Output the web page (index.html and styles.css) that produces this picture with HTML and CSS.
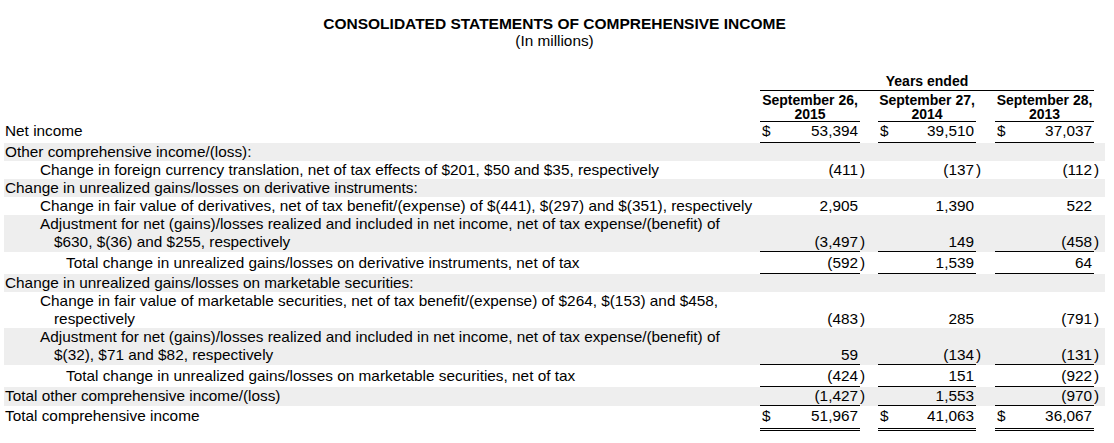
FILE: index.html
```html
<!DOCTYPE html>
<html>
<head>
<meta charset="utf-8">
<title>Consolidated Statements of Comprehensive Income</title>
<link rel="stylesheet" href="styles.css">
</head>
<body>
<div class="page">
  <div class="title">CONSOLIDATED STATEMENTS OF COMPREHENSIVE INCOME</div>
  <div class="subtitle">(In millions)</div>
  <table class="stmt">
    <colgroup>
      <col class="c-label"><col class="c-a"><col class="c-par"><col class="c-g1">
      <col class="c-b"><col class="c-par"><col class="c-g2">
      <col class="c-c"><col class="c-par"><col class="c-tail">
    </colgroup>
    <tr class="hrow1">
      <td></td><td class="yrs" colspan="7">Years ended</td><td colspan="2"></td>
    </tr>
    <tr class="hrow2">
      <td></td><td class="hd">September 26,<br>2015</td><td></td><td></td>
      <td class="hd">September 27,<br>2014</td><td></td><td></td>
      <td class="hd">September 28,<br>2013</td><td colspan="2"></td>
    </tr>
    <tr class="net u">
      <td class="l0">Net income</td>
      <td class="n ul"><span class="cur">$</span>53,394</td><td class="p"></td><td></td>
      <td class="n ul"><span class="cur">$</span>39,510</td><td class="p"></td><td></td>
      <td class="n ul"><span class="cur">$</span>37,037</td><td class="p"></td><td></td>
    </tr>
    <tr class="alt">
      <td class="l0">Other comprehensive income/(loss):</td>
      <td></td><td></td><td></td><td></td><td></td><td></td><td></td><td></td><td></td>
    </tr>
    <tr>
      <td class="l1">Change in foreign currency translation, net of tax effects of $201, $50 and $35, respectively</td>
      <td class="n">(411</td><td class="p">)</td><td></td>
      <td class="n">(137</td><td class="p">)</td><td></td>
      <td class="n">(112</td><td class="p">)</td><td></td>
    </tr>
    <tr class="alt">
      <td class="l0">Change in unrealized gains/losses on derivative instruments:</td>
      <td></td><td></td><td></td><td></td><td></td><td></td><td></td><td></td><td></td>
    </tr>
    <tr>
      <td class="l1">Change in fair value of derivatives, net of tax benefit/(expense) of $(441), $(297) and $(351), respectively</td>
      <td class="n">2,905</td><td class="p"></td><td></td>
      <td class="n">1,390</td><td class="p"></td><td></td>
      <td class="n">522</td><td class="p"></td><td></td>
    </tr>
    <tr class="alt u">
      <td class="l1">Adjustment for net (gains)/losses realized and included in net income, net of tax expense/(benefit) of<br>$630, $(36) and $255, respectively</td>
      <td class="n ul">(3,497</td><td class="p">)</td><td></td>
      <td class="n ul">149</td><td class="p"></td><td></td>
      <td class="n ul">(458</td><td class="p">)</td><td></td>
    </tr>
    <tr class="tot u">
      <td class="l2">Total change in unrealized gains/losses on derivative instruments, net of tax</td>
      <td class="n ul">(592</td><td class="p">)</td><td></td>
      <td class="n ul">1,539</td><td class="p"></td><td></td>
      <td class="n ul">64</td><td class="p"></td><td></td>
    </tr>
    <tr class="alt">
      <td class="l0">Change in unrealized gains/losses on marketable securities:</td>
      <td></td><td></td><td></td><td></td><td></td><td></td><td></td><td></td><td></td>
    </tr>
    <tr>
      <td class="l1">Change in fair value of marketable securities, net of tax benefit/(expense) of $264, $(153) and $458,<br>respectively</td>
      <td class="n">(483</td><td class="p">)</td><td></td>
      <td class="n">285</td><td class="p"></td><td></td>
      <td class="n">(791</td><td class="p">)</td><td></td>
    </tr>
    <tr class="alt u">
      <td class="l1">Adjustment for net (gains)/losses realized and included in net income, net of tax expense/(benefit) of<br>$(32), $71 and $82, respectively</td>
      <td class="n ul">59</td><td class="p"></td><td></td>
      <td class="n ul">(134</td><td class="p">)</td><td></td>
      <td class="n ul">(131</td><td class="p">)</td><td></td>
    </tr>
    <tr class="tot u">
      <td class="l2">Total change in unrealized gains/losses on marketable securities, net of tax</td>
      <td class="n ul">(424</td><td class="p">)</td><td></td>
      <td class="n ul">151</td><td class="p"></td><td></td>
      <td class="n ul">(922</td><td class="p">)</td><td></td>
    </tr>
    <tr class="alt u">
      <td class="l0">Total other comprehensive income/(loss)</td>
      <td class="n ul">(1,427</td><td class="p">)</td><td></td>
      <td class="n ul">1,553</td><td class="p"></td><td></td>
      <td class="n ul">(970</td><td class="p">)</td><td></td>
    </tr>
    <tr class="grand">
      <td class="l0">Total comprehensive income</td>
      <td class="n dbl"><span class="cur">$</span>51,967</td><td class="p"></td><td></td>
      <td class="n dbl"><span class="cur">$</span>41,063</td><td class="p"></td><td></td>
      <td class="n dbl"><span class="cur">$</span>36,067</td><td class="p"></td><td></td>
    </tr>
  </table>
</div>
</body>
</html>
```

FILE: styles.css
```css
html, body {
  margin: 0;
  padding: 0;
  background: #ffffff;
}

body {
  font-family: "Liberation Sans", Arial, sans-serif;
  color: #000000;
}

.page {
  width: 1101px;
  margin-left: 4px;
  padding-top: 15px;
}

.title {
  font-weight: bold;
  font-size: 15.5px;
  line-height: 17px;
  text-align: center;
}

.subtitle {
  font-size: 15.35px;
  line-height: 18px;
  text-align: center;
}

.stmt {
  margin-top: 24px;
  width: 1101px;
  table-layout: fixed;
  border-collapse: separate;
  border-spacing: 0;
  font-size: 15.35px;
}

.stmt td {
  padding: 0;
  line-height: 18px;
  vertical-align: bottom;
  white-space: nowrap;
}

col.c-label { width: 756px; }
col.c-a { width: 100px; }
col.c-par { width: 6px; }
col.c-g1 { width: 12px; }
col.c-b { width: 98px; }
col.c-g2 { width: 13px; }
col.c-c { width: 99px; }
col.c-tail { width: 5px; }

.stmt td.yrs {
  font-size: 14px;
  font-weight: bold;
  line-height: 14px;
  text-align: center;
  padding-bottom: 2px;
  border-bottom: 1px solid #000;
}

.stmt td.hd {
  font-size: 14px;
  font-weight: bold;
  line-height: 14px;
  text-align: center;
  padding-top: 2px;
  border-bottom: 1px solid #000;
}

.stmt tr.alt td {
  background: #eeeeee;
}

.stmt td.l0 { padding-left: 1px; }
.stmt td.l1 { padding-left: 50px; text-indent: -14px; }
.stmt td.l2 { padding-left: 62px; }

.stmt td.n {
  text-align: right;
  padding-right: 2px;
}

.stmt td.p {
  text-align: left;
}

.cur {
  float: left;
  padding-left: 2px;
}

/* rows carrying a rule: every cell reserves the rule's space */
.stmt tr.u td {
  border-bottom: 1px solid transparent;
}

.stmt tr.u td.ul {
  border-bottom-color: #000;
}

.stmt tr.net td {
  padding-bottom: 2px;
}

.stmt tr.tot td {
  padding-top: 2px;
  padding-bottom: 1px;
}

.stmt tr.grand td {
  padding-top: 1px;
  padding-bottom: 3px;
  border-bottom: 3px double transparent;
}

.stmt tr.grand td.dbl {
  border-bottom-color: #000;
}
```
